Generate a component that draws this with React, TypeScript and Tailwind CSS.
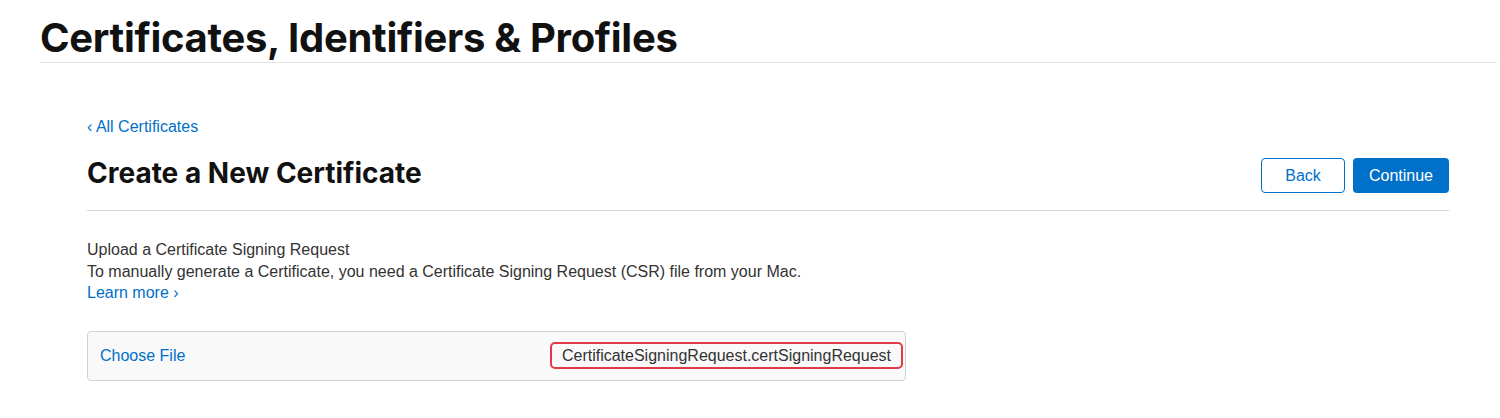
import React from 'react';

const App: React.FC = () => {
    return (
        <div className="w-[1500px] h-[418px] bg-white overflow-hidden font-['Liberation_Sans',Arial,sans-serif] text-[#333]">
            {/* Page header */}
            <div className="pl-10 pr-[3px] pt-[15px]">
                <h1 className="font-['Inter',sans-serif] text-[40px] leading-[46px] font-bold tracking-[-0.3px] text-[#111] border-b border-[#e5e5e5] pb-[1px]">
                    Certificates, Identifiers &amp; Profiles
                </h1>
            </div>

            <div className="ml-[87px] w-[1362px]">
                <a className="block mt-[54px] text-[16px] leading-[20px] text-[#0070c9]">‹ All Certificates</a>

                {/* Title row */}
                <div className="flex items-center justify-between mt-[15px] pb-[17px] border-b border-[#d6d6d6]">
                    <h2 className="font-['Inter',sans-serif] text-[28px] leading-[36px] font-bold text-[#111]">
                        Create a New Certificate
                    </h2>
                    <div className="flex gap-2 mt-[6px]">
                        <button className="w-[84px] h-[35px] rounded-[4px] border border-[#0070c9] text-[#0070c9] text-[16px]">
                            Back
                        </button>
                        <button className="w-[96px] h-[35px] rounded-[4px] bg-[#0070c9] text-white text-[16px]">
                            Continue
                        </button>
                    </div>
                </div>

                {/* Upload section */}
                <div className="mt-[28px] text-[16px] leading-[21.5px]">
                    <p className="text-[#333]">Upload a Certificate Signing Request</p>
                    <p className="text-[#333]">
                        To manually generate a Certificate, you need a Certificate Signing Request (CSR) file from your Mac.
                    </p>
                    <a className="block text-[#0070c9]">Learn more ›</a>
                </div>

                <div className="mt-[27px] w-[819px] h-[50px] flex items-center justify-between pl-[12px] pr-[2px] bg-[#f9f9f9] border border-[#d2d2d2] rounded-[4px]">
                    <span className="text-[16px] text-[#0070c9]">Choose File</span>
                    <span className="h-[27px] flex items-center px-[10px] border-[2.5px] border-[#e23a48] rounded-[5px] text-[16px] text-[#333]">
                        CertificateSigningRequest.certSigningRequest
                    </span>
                </div>
            </div>
        </div>
    );
};

export default App;
